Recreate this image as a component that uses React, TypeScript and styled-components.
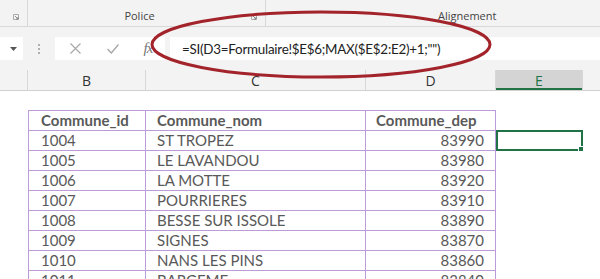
import React from 'react';
import styled, { createGlobalStyle } from 'styled-components';

const Global = createGlobalStyle`
  html, body { margin: 0; padding: 0; background: #fff; }
  body { width: 600px; height: 279px; overflow: hidden; font-family: Lato, "Open Sans", sans-serif; }
`;

const Screen = styled.div`
  position: relative;
  width: 600px;
  height: 279px;
  overflow: hidden;
  display: flex;
  flex-direction: column;
  background: #fff;
`;

const Ribbon = styled.div`
  height: 27px;
  flex: none;
  display: flex;
  background: #f3f3f3;
  border-bottom: 1px solid #d8d8d8;
  box-sizing: border-box;
`;

const Group = styled.div<{ $w?: number; $pl?: number }>`
  ${p => (p.$w ? `width: ${p.$w}px; flex: none;` : 'flex: 1;')}
  display: flex;
  align-items: flex-end;
  padding: 0 8px 3px ${p => p.$pl ?? 0}px;
  box-sizing: border-box;
  border-right: ${p => (p.$w ? '1px solid #d8d8d8' : 'none')};
  font: 11px "Open Sans", sans-serif;
  color: #444;
`;

const GroupLabel = styled.span<{ $center?: boolean }>`
  flex: ${p => (p.$center ? 1 : 'none')};
  text-align: center;
  line-height: 14px;
`;

const Launcher = styled.svg`
  flex: none;
  width: 6px;
  height: 6px;
  margin-bottom: 3px;
  margin-left: auto;
`;

const FormulaBar = styled.div`
  height: 43px;
  flex: none;
  display: flex;
  align-items: flex-start;
  padding-top: 10px;
  box-sizing: border-box;
  background: #f3f3f3;
`;

const NameBox = styled.div`
  width: 23px;
  height: 23px;
  flex: none;
  background: #fff;
  display: flex;
  align-items: center;
  justify-content: flex-end;
  padding-right: 6px;
  box-sizing: border-box;
`;

const Dots = styled.div`
  width: 32px;
  height: 23px;
  flex: none;
  display: flex;
  flex-direction: column;
  align-items: center;
  justify-content: center;
  gap: 2px;
`;

const Dot = styled.span`
  width: 2px;
  height: 2px;
  background: #b0b0b0;
`;

const ButtonsBox = styled.div`
  width: 110px;
  height: 23px;
  flex: none;
  background: #fff;
  display: grid;
  grid-template-columns: 40px 36px 34px;
  align-items: center;
  justify-items: center;
`;

const FxLabel = styled.span`
  font: italic 15px "Liberation Serif", serif;
  color: #777;
  letter-spacing: -1px;
`;

const FormulaInput = styled.div`
  flex: 1;
  margin-left: 5px;
  height: 23px;
  background: #fff;
  display: flex;
  align-items: center;
  padding-left: 12px;
  font: 13.4px Lato, sans-serif;
  letter-spacing: -0.25px;
  color: #222;
  white-space: pre;
`;

const COLS = '28px 118px 220px 130px 87px 1fr';

const HeaderRow = styled.div`
  height: 20px;
  flex: none;
  display: grid;
  grid-template-columns: ${COLS};
  background: #f3f3f3;
  border-bottom: 1px solid #d0d0d0;
  box-sizing: content-box;
`;

const ColHead = styled.div<{ $active?: boolean }>`
  display: flex;
  align-items: center;
  justify-content: center;
  font: 14px "Open Sans", sans-serif;
  color: ${p => (p.$active ? '#217346' : '#333')};
  background: ${p => (p.$active ? '#d4d4d4' : 'transparent')};
  border-right: 1px solid #d8d8d8;
  box-shadow: ${p => (p.$active ? 'inset 0 -2px 0 #217346' : 'none')};
`;

const Sheet = styled.div`
  flex: 1;
  display: flex;
  flex-direction: column;
  padding-top: 19px;
`;

const Row = styled.div<{ $head?: boolean }>`
  display: grid;
  grid-template-columns: ${COLS};
  height: ${p => (p.$head ? 21 : 20)}px;
  flex: none;
`;

const PURPLE = '#bd9bd9';

const Cell = styled.div<{ $head?: boolean; $right?: boolean; $first?: boolean }>`
  box-sizing: border-box;
  border-right: 1px solid ${PURPLE};
  border-bottom: 1px solid ${PURPLE};
  ${p => (p.$first ? `border-left: 1px solid ${PURPLE};` : '')}
  ${p => (p.$head ? `border-top: 1px solid ${PURPLE};` : '')}
  font: ${p => (p.$head ? 'bold' : 'normal')} 15px Lato, sans-serif;
  color: #595959;
  line-height: 19px;
  padding: ${p => (p.$right ? '0 11px 0 0' : p.$first ? '0 0 0 12px' : '0 0 0 11px')};
  text-align: ${p => (p.$right ? 'right' : 'left')};
  white-space: nowrap;
  overflow: hidden;
`;

const Blank = styled.div``;

const Selected = styled.div`
  position: relative;
  box-sizing: border-box;
  margin-top: -1px;
  height: 21px;
  border: 2px solid #217346;
`;

const FillHandle = styled.span`
  position: absolute;
  right: -3px;
  bottom: -3px;
  width: 4px;
  height: 4px;
  background: #217346;
  border: 1px solid #fff;
`;

const Overlay = styled.svg`
  position: absolute;
  left: 0;
  top: 0;
  width: 600px;
  height: 279px;
  pointer-events: none;
`;

const rows: [string, string, string][] = [
  ['1004', 'ST TROPEZ', '83990'],
  ['1005', 'LE LAVANDOU', '83980'],
  ['1006', 'LA MOTTE', '83920'],
  ['1007', 'POURRIERES', '83910'],
  ['1008', 'BESSE SUR ISSOLE', '83890'],
  ['1009', 'SIGNES', '83870'],
  ['1010', 'NANS LES PINS', '83860'],
  ['1011', 'BARGEME', '83840'],
];

const LauncherIcon = () => (
  <Launcher viewBox="0 0 6 6">
    <path d="M0.5 0.5 H5.5 V5.5 H0.5 Z" fill="none" stroke="#9a9a9a" strokeWidth="0.8" />
    <path d="M2 2 L5 5 M5 3 V5 H3" fill="none" stroke="#777" strokeWidth="0.8" />
  </Launcher>
);

export default function App() {
  return (
    <Screen>
      <Global />
      <Ribbon>
        <Group $w={28}>
          <LauncherIcon />
        </Group>
        <Group $w={238}>
          <GroupLabel $center>Police</GroupLabel>
          <LauncherIcon />
        </Group>
        <Group $pl={172}>
          <GroupLabel>Alignement</GroupLabel>
        </Group>
      </Ribbon>
      <FormulaBar>
        <NameBox>
          <svg width="7" height="4" viewBox="0 0 7 4">
            <path d="M0 0 H7 L3.5 4 Z" fill="#555" />
          </svg>
        </NameBox>
        <Dots>
          <Dot />
          <Dot />
          <Dot />
        </Dots>
        <ButtonsBox>
          <svg width="11" height="11" viewBox="0 0 11 11">
            <path d="M0.5 0.5 L10.5 10.5 M10.5 0.5 L0.5 10.5" stroke="#a8a8a8" strokeWidth="1.2" fill="none" />
          </svg>
          <svg width="12" height="10" viewBox="0 0 12 10">
            <path d="M0.5 5 L4.3 9 L11.5 0.5" stroke="#a8a8a8" strokeWidth="1.4" fill="none" />
          </svg>
          <FxLabel>fx</FxLabel>
        </ButtonsBox>
        <FormulaInput>=SI(D3=Formulaire!$E$6;MAX($E$2:E2)+1;"")</FormulaInput>
      </FormulaBar>
      <HeaderRow>
        <ColHead />
        <ColHead>B</ColHead>
        <ColHead>C</ColHead>
        <ColHead>D</ColHead>
        <ColHead $active>E</ColHead>
        <Blank />
      </HeaderRow>
      <Sheet>
        <Row $head>
          <Blank />
          <Cell $head $first>Commune_id</Cell>
          <Cell $head>Commune_nom</Cell>
          <Cell $head style={{ paddingLeft: 10 }}>Commune_dep</Cell>
          <Blank />
          <Blank />
        </Row>
        {rows.map(([id, nom, dep], i) => (
          <Row key={id}>
            <Blank />
            <Cell $first>{id}</Cell>
            <Cell>{nom}</Cell>
            <Cell $right>{dep}</Cell>
            {i === 0 ? (
              <Selected>
                <FillHandle />
              </Selected>
            ) : (
              <Blank />
            )}
            <Blank />
          </Row>
        ))}
      </Sheet>
      <Overlay viewBox="0 0 600 279">
        <ellipse cx="321" cy="44.5" rx="169" ry="32.5" fill="none" stroke="#a3232b" strokeWidth="3" />
      </Overlay>
    </Screen>
  );
}
